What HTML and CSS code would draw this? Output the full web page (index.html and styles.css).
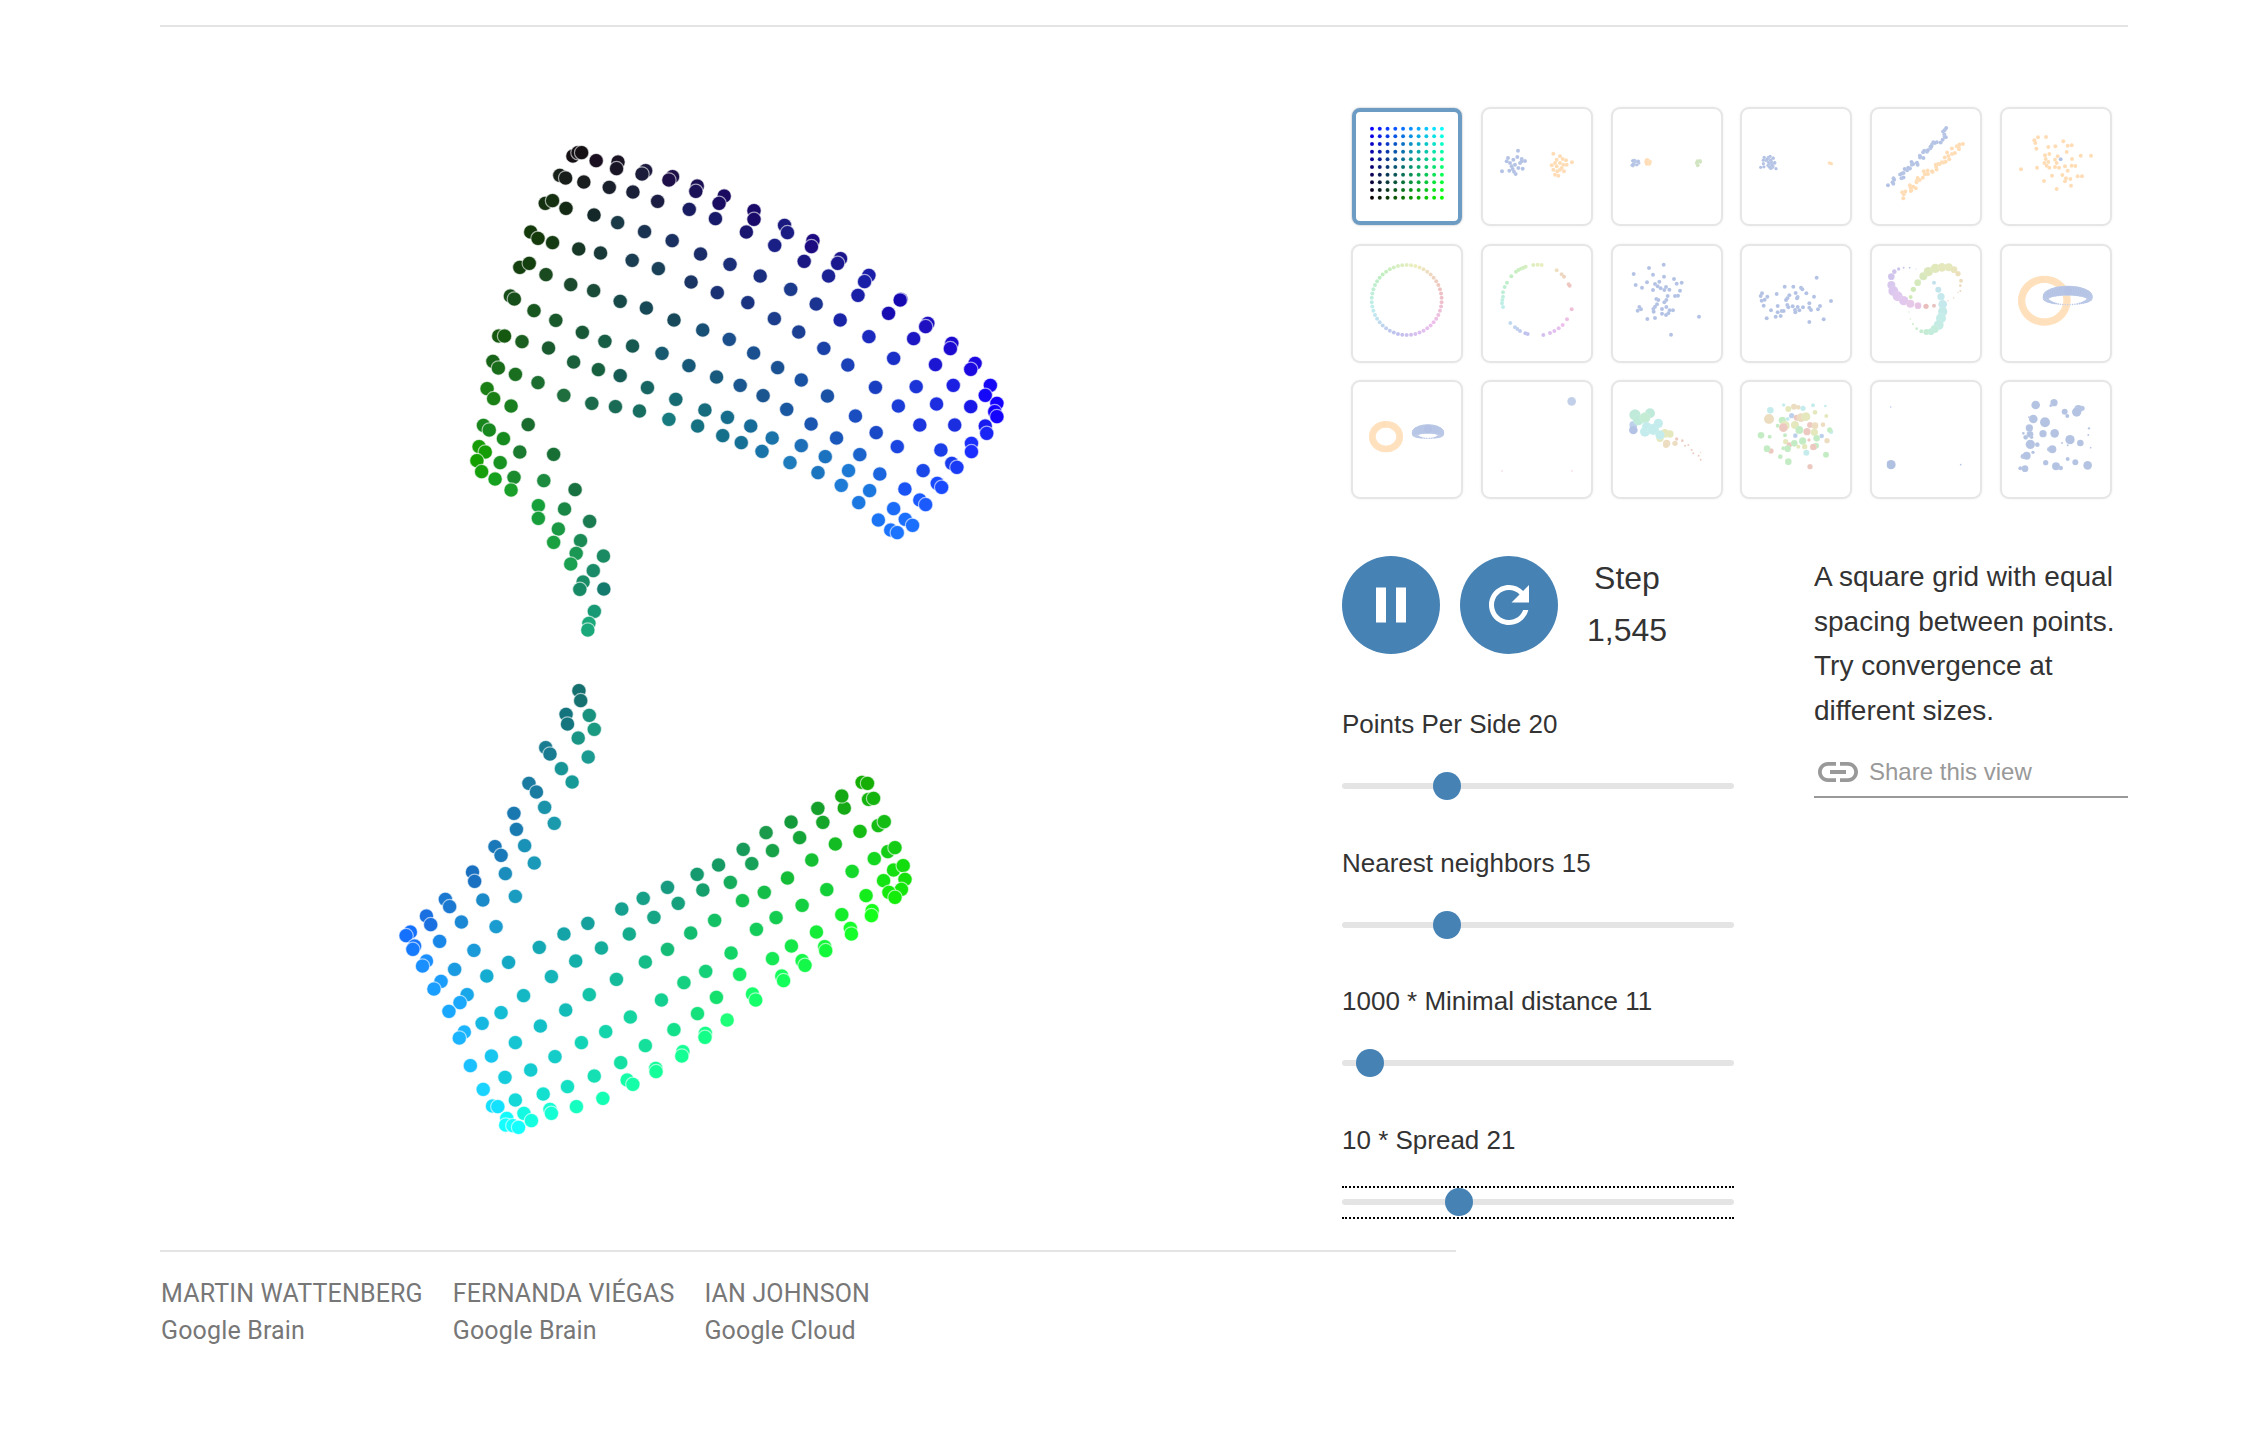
FILE: index.html
```html
<!DOCTYPE html>
<html lang="en">
<head>
  <meta charset="UTF-8" />
  <title>Understanding UMAP</title>
  <link rel="stylesheet" href="styles.css">
</head>
<body>
  <div class="page">
    <div class="rule-top"></div>

    <main class="vis">
      <svg id="plot" class="plot" viewBox="160 60 1182 1190"></svg>

      <section class="panel">
        <div id="presets" class="presets"></div>

        <div class="panel-body">
          <div class="controls">
            <div class="play-row">
              <button class="round-btn" aria-label="Pause">
                <svg viewBox="0 0 24 24"><path d="M6 19h4V5H6v14zm8-14v14h4V5h-4z"/></svg>
              </button>
              <button class="round-btn" aria-label="Restart">
                <svg viewBox="0 0 24 24"><path d="M17.65 6.35C16.2 4.9 14.21 4 12 4c-4.42 0-7.99 3.58-7.99 8s3.57 8 7.99 8c3.73 0 6.84-2.55 7.73-6h-2.08c-.82 2.33-3.04 4-5.65 4-3.31 0-6-2.69-6-6s2.69-6 6-6c1.66 0 3.14.69 4.22 1.78L13 11h7V4l-2.35 2.35z"/></svg>
              </button>
              <div class="step">
                <div>Step</div>
                <div>1,545</div>
              </div>
            </div>

            <div class="slider">
              <label for="points">Points Per Side 20</label>
              <input id="points" type="range" min="10" max="50" value="20">
            </div>
            <div class="slider">
              <label for="neighbors">Nearest neighbors 15</label>
              <input id="neighbors" type="range" min="5" max="45" value="15">
            </div>
            <div class="slider">
              <label for="distance">1000 * Minimal distance 11</label>
              <input id="distance" type="range" min="0" max="286" value="11">
            </div>
            <div class="slider slider-last">
              <label for="spread">10 * Spread 21</label>
              <div class="focused">
                <input id="spread" type="range" min="1" max="72" value="21">
              </div>
            </div>
          </div>

          <div class="about">
            <p>A square grid with equal spacing between points. Try convergence at different sizes.</p>
            <a class="share" href="#">
              <svg viewBox="0 0 24 24"><path d="M3.9 12c0-1.71 1.39-3.1 3.1-3.1h4V7H7c-2.76 0-5 2.24-5 5s2.24 5 5 5h4v-1.9H7c-1.71 0-3.1-1.39-3.1-3.1zM8 13h8v-2H8v2zm9-6h-4v1.9h4c1.71 0 3.1 1.39 3.1 3.1s-1.39 3.1-3.1 3.1h-4V17h4c2.76 0 5-2.24 5-5s-2.24-5-5-5z"/></svg>
              Share this view
            </a>
          </div>
        </div>
      </section>
    </main>

    <footer class="credits">
      <div class="person">
        <div>MARTIN WATTENBERG</div>
        <div>Google Brain</div>
      </div>
      <div class="person">
        <div>FERNANDA VIÉGAS</div>
        <div>Google Brain</div>
      </div>
      <div class="person">
        <div>IAN JOHNSON</div>
        <div>Google Cloud</div>
      </div>
    </footer>
  </div>

  <script src="script.js"></script>
</body>
</html>
```

FILE: styles.css
```css
body {
  margin: 0;
  background: #fff;
  color: #333;
  font-family: "Liberation Sans", Arial, sans-serif;
}
.page {
  width: 1968px;
  margin-left: 160px;
  padding-top: 25px;
}
.rule-top {
  height: 2px;
  background: #e4e4e4;
}
.vis {
  display: flex;
  margin-top: 33px;
}
.plot {
  display: block;
  width: 1182px;
  height: 1190px;
  flex: none;
  filter: blur(0.6px);
}
.plot circle {
  stroke: rgba(255, 255, 255, 0.6);
  stroke-width: 1.2;
}
.panel {
  width: 786px;
  flex: none;
  padding-top: 47px;
}

/* preset thumbnails */
.presets {
  display: grid;
  grid-template-columns: repeat(6, 112px);
  grid-auto-rows: 119px;
  gap: 17.5px 17.8px;
  margin-left: 9px;
}
.preset {
  display: block;
  box-sizing: border-box;
  padding: 0;
  background: #fff;
  border: 2px solid #e6e6e6;
  border-radius: 9px;
  box-shadow: 0 0 3px rgba(0, 0, 0, 0.06);
  cursor: pointer;
}
.preset.selected {
  outline: 4px solid #6c9bc4;
  outline-offset: -5px;
}
.preset svg {
  display: block;
  width: 108px;
  height: 115px;
  filter: blur(0.4px);
}
.preset circle {
  stroke: rgba(255, 255, 255, 0.35);
  stroke-width: 0.8;
}

.panel-body {
  display: flex;
  margin-top: 57px;
}
.controls {
  width: 392px;
  flex: none;
}
.play-row {
  display: flex;
  gap: 20px;
  height: 98px;
  margin-bottom: 55px;
}
.round-btn {
  width: 98px;
  height: 98px;
  padding: 19px;
  border: none;
  border-radius: 50%;
  background: #4682b4;
  cursor: pointer;
}
.round-btn svg {
  display: block;
  width: 60px;
  height: 60px;
  fill: #fff;
}
.step {
  width: 100px;
  margin: -4px 0 0 -1px;
  text-align: center;
  font-size: 32px;
  line-height: 52px;
}
.slider {
  height: 138.6px;
}
.slider-last {
  height: auto;
}
.slider label {
  display: block;
  height: 30px;
  margin-bottom: 33px;
  font-size: 26px;
  line-height: 30px;
}
.slider input {
  display: block;
  width: 392px;
  height: 28px;
  margin: 0;
  background: transparent;
  -webkit-appearance: none;
  appearance: none;
  cursor: pointer;
}
.slider input::-webkit-slider-runnable-track {
  height: 6px;
  border-radius: 3px;
  background: #e4e4e4;
}
.slider input::-webkit-slider-thumb {
  width: 28px;
  height: 28px;
  margin-top: -11px;
  border-radius: 50%;
  background: #4682b4;
  -webkit-appearance: none;
}
.focused {
  margin-top: -2px;
  padding-bottom: 1px;
  border-top: 2px dotted #000;
  border-bottom: 2px dotted #000;
}

.about {
  width: 314px;
  margin-left: 80px;
  flex: none;
}
.about p {
  margin: -1px 0 0;
  font-size: 28px;
  line-height: 44.5px;
}
.share {
  display: flex;
  align-items: center;
  height: 48px;
  margin-top: 15px;
  border-bottom: 2px solid #999;
  color: #999;
  font-size: 24px;
  text-decoration: none;
}
.share svg {
  width: 48px;
  height: 48px;
  margin-right: 7px;
  fill: #999;
}

.credits {
  display: flex;
  gap: 30px;
  width: 1295px;
  padding: 23px 0 0 1px;
  border-top: 2px solid #e4e4e4;
  color: #777;
  font-family: Roboto, Arial, sans-serif;
  font-size: 25px;
  line-height: 37px;
  letter-spacing: 0.15px;
}
```

FILE: script.js
```js
// Projection plot and preset thumbnails, drawn from point data.
const SVG_NS = "http://www.w3.org/2000/svg";

function addDot(svg, x, y, r, fill) {
  const c = document.createElementNS(SVG_NS, "circle");
  c.setAttribute("cx", x);
  c.setAttribute("cy", y);
  c.setAttribute("r", r);
  c.setAttribute("fill", fill);
  svg.appendChild(c);
}

function hex(h) {
  return [1, 3, 5].map((i) => parseInt(h.slice(i, i + 2), 16));
}

// colour of a point: weighted from the nearest anchor colours
function blend(x, y, anchors) {
  let sum = [0, 0, 0], total = 0;
  anchors.forEach(([ax, ay, col]) => {
    const d = Math.hypot(ax - x, ay - y) + 0.5;
    const w = 1 / (d * d * d * d);
    const c = hex(col);
    sum = sum.map((v, i) => v + c[i] * w);
    total += w;
  });
  return "rgb(" + sum.map((v) => Math.round(v / total)).join(",") + ")";
}

/* ---------- main plot: upper sheet ---------- */
const upperPts = [
  [338,78],[352,68],[362,68],[402,92],[462,96],[458,116],[538,122],[528,132],[612,140],[602,150],[680,168],[676,184],[754,198],[740,220],[836,242],[836,268],[920,286],[928,308],[998,332],[994,350],[1074,386],[1066,400],[1152,436],[1140,455],[1240,508],[1238,510],[1314,580],[1308,590],[1380,640],[1376,656],[1444,700],[1432,718],[1486,766],[1472,796],[1504,820],[1498,845],[1504,860],[1472,888],[1476,910],[1434,940],[1434,965],[1380,1000],[1394,1012],[1340,1060],[1352,1072],[1292,1110],[1308,1124],[1252,1168],[1272,1186],[1212,1200],[1230,1208],
  [302,136],[318,144],[368,156],[438,172],[503,186],[571,214],[658,238],[730,266],[815,306],[893,346],[974,394],[1041,438],[1122,496],[1206,550],[1275,626],[1335,704],[1384,766],[1432,830],[1388,885],[1350,960],[1301,1022],[1251,1077],[1220,1136],[1178,1170],
  [262,220],[282,212],[319,235],[396,255],[461,278],[535,305],[611,332],[689,372],[770,403],[853,438],[937,478],[1007,522],[1073,570],[1152,620],[1220,685],[1282,770],[1338,822],[1292,885],[1230,950],[1182,1032],[1154,1082],[1124,1118],
  [222,306],[242,325],[282,338],[354,357],[414,369],[501,391],[573,416],[663,456],[735,488],[819,518],[892,566],[959,606],[1028,655],[1094,705],[1170,772],[1233,828],[1172,908],[1127,974],[1096,1022],[1076,1066],
  [192,412],[218,400],[264,434],[332,464],[395,482],[468,514],[540,534],[616,570],[695,600],[768,628],[835,669],[901,713],[966,750],[1038,798],[1115,858],[1063,924],[1032,980],[1012,1028],
  [166,498],[177,507],[231,542],[291,571],[364,607],[426,634],[502,648],[583,670],[657,707],[733,741],[798,766],[861,797],[926,838],[993,882],[966,947],[935,998],
  [134,618],[150,618],[198,635],[271,654],[340,696],[408,719],[468,737],[543,773],[621,808],[701,840],[763,862],[827,888],[886,924],[858,964],[801,938],[750,917],[681,888],[602,868],[521,843],[455,830],[390,820],[313,796],
  [242,758],[180,733],[118,694],[133,714],[102,776],[120,806],[168,828],[215,884],[92,886],[108,900],[147,926],[192,966],[285,973],[80,950],[97,966],[74,992],[138,998],[87,1025],[176,1042],[124,1047],[258,1052],[168,1080],[344,1079],[243,1127],[315,1137],[243,1165],[384,1174],[298,1197],[285,1237],[359,1232],[347,1270],[422,1278],[332,1302],[394,1322],[366,1356],[357,1378],[423,1377],[397,1444],[382,1480],[379,1500]
];

const upperColors = [
  [350,70,"#141014"],[402,92,"#1a0f20"],[1504,820,"#1400ff"],[1230,1208,"#1a74ff"],[74,992,"#14a000"],[379,1500,"#1aa87a"],[423,1377,"#147a6e"],[344,1079,"#177040"],[285,973,"#176f35"],[215,884,"#1a6b2e"],[313,796,"#1f6e3e"],[455,830,"#1a6b55"],[602,868,"#167a7e"],[750,917,"#146f8a"],[935,998,"#1f7cbc"],[1076,1066,"#1e7cd6"],[1124,1118,"#1a78e0"],[1012,1028,"#1b75bf"],[858,964,"#1874a8"],[993,882,"#1a55b0"],[1115,858,"#1a4dc0"],[1233,828,"#1a3dd8"],[1338,822,"#1c2ee0"],[1432,830,"#1818e8"],[1388,885,"#1a2ee0"],[1350,960,"#1a3ee8"],[1301,1022,"#1a48e8"],[1434,965,"#1a2eff"],[1352,1072,"#1a4aff"],[1308,1124,"#1a5aff"],[1170,772,"#1a3ec0"],[1038,798,"#1a52a5"],[861,797,"#1a5590"],[621,808,"#166a72"],[408,719,"#17603f"],[468,737,"#165a54"],[268,654,"#1a5a2f"],[198,635,"#1a5f1f"],[150,618,"#14590f"],[120,806,"#1a7f14"],[168,828,"#1a7f1f"],[147,926,"#178a1f"],[192,966,"#1a7a2f"],[176,1042,"#1a8a2f"],[124,1047,"#16a01f"],[168,1080,"#1aa02a"],[243,1127,"#16a03a"],[285,1237,"#1aa040"],[332,1302,"#1aa050"],[258,1052,"#1c8a3f"],[315,1137,"#1a8645"],[384,1174,"#1a7a50"],[359,1232,"#1a8a55"],[394,1322,"#1a8a68"],[218,400,"#143f0f"],[264,434,"#1a4a20"],[395,482,"#1a4a38"],[573,416,"#1a4058"],[540,534,"#174855"],[657,707,"#175878"],[835,669,"#1a5090"],[937,478,"#1c3a8c"],[1122,496,"#1a1fa8"],[1240,508,"#1608b0"],[1314,580,"#1e10c0"],[1220,685,"#1a2ec8"],[1444,700,"#1c08e0"],[1380,640,"#1c0ad0"],[998,332,"#1c0a80"],[836,242,"#1a0a6a"],[754,198,"#1a0a60"],[612,140,"#1f0f48"],[503,186,"#1a2038"],[396,255,"#14282a"],[319,235,"#142a14"],[368,156,"#1a1e1e"],[282,212,"#143010"],[222,306,"#143a0c"],[461,278,"#1a3a48"],[611,332,"#1a3060"],[689,372,"#1a2d68"],[853,438,"#1a2f80"],[730,266,"#171a68"],[893,346,"#1a1f85"],[770,403,"#1a2f78"]
];

/* ---------- main plot: lower sheet ---------- */
const lowerPts = [
  [557,62],[562,92],[521,133],[586,136],[525,162],[600,178],[555,204],[464,233],[476,252],[583,261],[508,296],[538,336],[417,340],[438,366],[461,412],[375,430],[488,460],[382,478],[405,527],[322,530],[339,556],[432,579],[259,606],[351,611],[265,634],[379,679],[183,688],[195,710],[288,690],[130,738],[142,764],[228,756],[325,770],[85,786],[73,797],[97,828],[92,838],[167,814],[263,841],[130,873],[119,888],[209,898],[360,877],[299,918],[171,934],[151,957],[244,974],[224,998],[193,1024],[339,1028],[286,1060],[236,1086],[222,1104],[379,1118],[312,1158],[253,1187],[350,1222],[289,1258],[379,1290],[315,1308],[330,1310],[355,1345],[352,1365],[372,1367],[388,1372],[403,1330],[424,1352],[476,1318],[480,1330],[457,1272],[422,1200],[490,1160],[550,1310],[624,1285],[525,1250],[600,1218],[564,1118],[449,1068],[520,1020],[402,977],[480,920],[586,974],[632,1085],[701,1041],[662,928],[548,873],[446,832],[515,792],[620,834],[582,760],[698,792],[743,876],[677,717],[737,685],[767,742],[805,652],[835,700],[870,789],[805,838],[888,613],[904,660],[948,585],[981,637],[937,751],[1015,692],[1017,538],[1041,581],[1076,667],[1109,743],[1054,778],[983,849],[912,904],[851,938],[788,990],[942,982],[889,1031],[823,1079],[743,1127],[674,1178],[772,1195],[773,1205],[692,1230],[708,1243],[848,1145],[845,1158],[911,1090],[910,1102],[972,1050],[1043,972],[1052,990],[1007,913],[1099,866],[1125,918],[1130,932],[1152,828],[1182,872],[1190,886],[1245,830],[1248,842],[1222,786],[1182,706],[1251,659],[1293,734],[1317,775],[1320,792],[1378,722],[1376,737],[1361,677],[1322,604],[1141,624],[1209,570],[1275,522],[1344,484],[1384,566],[1099,542],[1175,503],[1240,457],[1081,488],[1151,456],[1226,415],[1300,414],[1293,378],[1350,337],[1365,340],[1368,388],[1382,385],[1395,467],[1412,455],[1422,545],[1442,533],[1438,600],[1465,587],[1470,628],[1410,632],[1460,658],[1425,667],[1442,682]
];

const lowerColors = [
  [557,62,"#14706e"],[600,178,"#1a9a80"],[583,261,"#1a9a90"],[538,336,"#169a98"],[488,460,"#1a9aac"],[432,579,"#1a9ab8"],[379,679,"#1a9cc0"],[325,770,"#1a9cd0"],[263,841,"#1a9ad8"],[209,898,"#1a9ae0"],[119,888,"#1a8fff"],[73,797,"#1470ff"],[130,738,"#1a70e0"],[183,688,"#1a78d0"],[259,606,"#1a70c0"],[322,530,"#1a78b8"],[375,430,"#1a78b0"],[417,340,"#1a7aa0"],[464,233,"#1a7c90"],[521,133,"#14747e"],[151,957,"#1a9eff"],[193,1024,"#1aa8ff"],[222,1104,"#1ab4ff"],[253,1187,"#1ac0ff"],[289,1258,"#1ad4ff"],[315,1308,"#14e0ff"],[372,1367,"#14ffff"],[424,1352,"#14ffe0"],[480,1330,"#14ffd4"],[550,1310,"#14ffc0"],[624,1285,"#14ffb4"],[708,1243,"#14ffa8"],[773,1205,"#14ff9a"],[845,1158,"#14ff94"],[911,1102,"#14ff88"],[972,1050,"#1fff7a"],[1052,990,"#14ff6a"],[1130,932,"#14ff5a"],[1190,886,"#14f84a"],[1248,842,"#14f83c"],[1320,792,"#14ff2a"],[1376,737,"#14ff1a"],[1442,682,"#14ec0a"],[1470,628,"#14e00a"],[1442,533,"#14cc14"],[1412,455,"#14bc14"],[1382,385,"#14b40f"],[1365,340,"#14ae05"],[1293,378,"#14a814"],[1226,415,"#14a02a"],[1151,456,"#149a3a"],[1081,488,"#1a9a4a"],[1017,538,"#189a5a"],[948,585,"#169a64"],[888,613,"#149a6e"],[805,652,"#169a80"],[737,685,"#16a088"],[677,717,"#16a090"],[582,760,"#14a09c"],[515,792,"#14a4a8"],[446,832,"#14a8b4"],[360,877,"#14a8c4"],[299,918,"#14acd0"],[339,1028,"#14bcd4"],[402,977,"#14b8c4"],[449,1068,"#14c0c8"],[520,1020,"#14bcb8"],[586,974,"#14c4a8"],[662,928,"#14bc9c"],[743,876,"#14bc88"],[805,838,"#14bc78"],[870,789,"#14bc70"],[937,751,"#14c064"],[1015,692,"#14c04f"],[1076,667,"#14bc48"],[1141,624,"#14bc38"],[1209,570,"#14c032"],[1275,522,"#14bc24"],[1344,484,"#14bc14"],[1384,566,"#14d81f"],[1322,604,"#14d82a"],[1251,659,"#14d038"],[1182,706,"#14d040"],[1109,743,"#14cc50"],[1054,778,"#14cc5a"],[983,849,"#14d468"],[912,904,"#14d078"],[851,938,"#14d080"],[788,990,"#14d090"],[701,1041,"#14d4a0"],[632,1085,"#14d4ac"],[564,1118,"#14d4b8"],[490,1160,"#14ccc8"],[422,1200,"#14ccd0"],[350,1222,"#14ccdc"],[379,1290,"#14d8d8"],[457,1272,"#14e0d0"],[525,1250,"#14e0c4"],[600,1218,"#14e0b4"],[674,1178,"#14e0a4"],[743,1127,"#14e09c"],[823,1079,"#14e08c"],[889,1031,"#14e07c"],[942,982,"#14e06e"],[1007,913,"#14e864"],[1099,866,"#14e854"],[1152,828,"#14e848"],[1222,786,"#14ec38"],[1293,734,"#14ec2c"],[1361,677,"#14ec1c"],[1410,632,"#14e414"]
];

const plot = document.getElementById("plot");
upperPts.forEach(([x, y]) => {
  addDot(plot, x / 2.75 + 450, y / 3 + 130, 7.2, blend(x, y, upperColors));
});
lowerPts.forEach(([x, y]) => {
  addDot(plot, x / 2.8 + 380, y / 3 + 670, 7.2, blend(x, y, lowerColors));
});

/* ---------- thumbnails ---------- */
const BLUE = "#b3c2e4", ORANGE = "#ffdcb4", RING_ORANGE = "#ffdfba";
const GREEN = "#c4ecc4", YELLOW = "#e4e8bc", TAN = "#ecdcc0", PINK = "#ecc8c0", AQUA = "#c4ecec", SKY = "#bcd0ec";

let seed = 7;
function rand() {
  seed = (seed * 16807) % 2147483647;
  return seed / 2147483647;
}

function cluster(cx, cy, rx, ry, n, r, fill) {
  const out = [];
  for (let i = 0; i < n; i++) {
    const a = rand() * Math.PI * 2, d = Math.sqrt(rand());
    out.push([cx + Math.cos(a) * d * rx, cy + Math.sin(a) * d * ry, r, fill]);
  }
  return out;
}

function band(x1, y1, x2, y2, n, jitter, r, fill) {
  const out = [];
  for (let i = 0; i < n; i++) {
    const t = i / (n - 1);
    out.push([x1 + (x2 - x1) * t + (rand() - 0.5) * jitter, y1 + (y2 - y1) * t + (rand() - 0.5) * jitter, r, fill]);
  }
  return out;
}

function ringHue(x, y, cx, cy) {
  const deg = Math.atan2(x - cx, cy - y) * 180 / Math.PI;
  return "hsl(" + (75 - deg + 720) % 360 + ",58%,84%)";
}

function ring(cx, cy, r, n) {
  const out = [];
  for (let i = 0; i < n; i++) {
    const a = i / n * Math.PI * 2;
    const x = cx + Math.sin(a) * r, y = cy - Math.cos(a) * r;
    out.push([x, y, 6, ringHue(x, y, cx, cy)]);
  }
  return out;
}

// loop seen from the side: big dots at the back, small at the front
function hoop(cx, cy, rx, ry, n, big, small, fill) {
  const out = [];
  for (let i = 0; i < n; i++) {
    const a = i / n * Math.PI * 2;
    const t = (1 - Math.cos(a)) / 2;
    out.push([cx + Math.sin(a) * rx, cy - Math.cos(a) * ry, small + (big - small) * (1 - t), fill]);
  }
  return out.sort((p, q) => p[2] - q[2]);
}

function withStyle(pts, r, fill) {
  return pts.map(([x, y]) => [x, y, r, fill]);
}

const gridDots = [];
for (let row = 0; row < 10; row++) {
  for (let col = 0; col < 10; col++) {
    gridDots.push([96 + col * 23.3, 87 + row * 23, 6, "rgb(10," + Math.round(col * 255 / 9) + "," + Math.round(255 - row * 255 / 9) + ")"]);
  }
}

const gappedRing = [[580,90],[593,89],[605,90],[650,106],[665,118],[672,125],[686,148],[689,152],[695,223],[681,253],[668,270],[656,280],[643,288],[630,294],[610,300],[563,297],[556,295],[540,288],[532,282],[525,277],[511,264],[489,216],[486,205],[487,195],[489,185],[489,172],[494,156],[501,143],[514,124],[528,110],[535,105],[543,101],[550,98],[557,95]];

// each: [origin x, origin y in the measuring crop, dots, white covers]
const presets = [
  [33, 22, gridDots],
  [423, 22, [
    ...withStyle([[534,153],[504,175],[555,184],[486,215],[527,223],[510,190],[520,180],[532,172],[545,178],[540,190],[525,195],[515,200],[535,205],[548,207],[508,213],[522,216],[545,185],[518,208],[500,185]], 6, BLUE),
    ...withStyle([[640,162],[696,188],[660,170],[668,178],[678,182],[650,180],[645,190],[635,197],[660,190],[670,195],[680,195],[650,200],[640,210],[660,210],[672,215],[645,225],[655,228],[665,205],[652,215]], 6, ORANGE)
  ]],
  [813, 22, [
    ...cluster(884, 190, 13, 11, 16, 5, BLUE),
    ...cluster(924, 189, 10, 10, 12, 5, ORANGE),
    ...cluster(1076, 190, 8, 12, 12, 5, "#cfe3bd")
  ]],
  [30, 22, [
    ...cluster(115, 188, 20, 20, 26, 5, BLUE),
    [92, 203, 5, BLUE], [138, 207, 5, BLUE],
    [298, 190, 5, ORANGE], [304, 192, 5, ORANGE]
  ]],
  [420, 22, [
    ...band(482, 252, 656, 94, 42, 18, 6, BLUE),
    ...band(518, 288, 692, 132, 42, 18, 6, ORANGE)
  ]],
  [810, 22, [
    ...withStyle([[924,113],[948,112],[913,122],[916,130],[919,147],[1000,125],[955,142],[976,140],[1013,138],[1025,137],[1010,157],[958,163],[945,167],[983,170],[1052,168],[1083,168],[975,180],[947,178],[943,190],[955,187],[980,190],[1026,178],[873,209],[921,204],[950,198],[958,204],[975,202],[987,204],[1005,200],[1025,198],[1036,199],[1013,213],[997,226],[966,228],[1008,236],[1021,238],[1005,245],[1043,230],[1056,230],[942,244],[980,268],[1023,258]], 6, ORANGE),
    [992, 179, 6, BLUE]
  ]],
  [33, 27, ring(200, 195, 105, 50)],
  [423, 27, gappedRing.map(([x, y]) => [x, y, 6, ringHue(x, y, 590, 195)])],
  [813, 27, withStyle([[971,89],[881,117],[927,99],[939,119],[972,125],[1002,132],[887,150],[921,142],[906,158],[958,140],[945,147],[953,154],[1010,146],[1025,143],[939,165],[962,160],[973,165],[978,156],[988,164],[1020,167],[1005,183],[1014,182],[983,183],[979,195],[973,202],[949,192],[955,195],[951,208],[945,215],[940,222],[941,230],[966,222],[979,216],[999,226],[989,226],[985,235],[978,240],[966,236],[898,216],[893,227],[903,223],[922,252],[945,249],[1077,245],[993,299]], 6, BLUE)],
  [30, 27, withStyle([[260,128],[164,155],[190,155],[213,158],[217,163],[96,175],[92,183],[112,185],[140,177],[178,181],[172,190],[197,174],[203,186],[229,175],[252,185],[95,197],[104,194],[168,195],[201,190],[101,212],[143,213],[172,210],[175,217],[188,214],[203,216],[219,217],[238,205],[238,218],[243,225],[264,223],[270,213],[303,198],[123,226],[155,228],[161,228],[143,232],[195,225],[196,232],[208,226],[137,245],[152,243],[110,250],[238,261],[281,253]], 6, BLUE)],
  [420, 27, [
    [558,102,1.5,BLUE],[539,98,2.5,BLUE],[521,98,3,"#c8c4ec"],[506,102,5,"#c8c4ec"],[493,110,7,"#d0c4ec"],[484,125,10,"#d0c4ec"],[484,150,12,"#d8c8ee"],[490,168,15,"#dcc8ee"],[503,184,15,"#e0c8ee"],[521,197,14,"#e2c8ec"],[541,206,12,"#e6c8e8"],[564,212,10,"#e8c4e4"],[588,214,8,"#e8bdbc"],[612,212,6,"#e8c0c0"],
    [612,143,6,"#c0e0ec"],[625,164,9,"#c4e4ec"],[633,185,11,"#c4e8ec"],[638,208,13,"#c4e8ec"],[638,230,14,"#c4eae8"],[633,250,15,"#c4ece8"],[626,270,15,"#c4ece4"],[614,282,12,"#c4ecdc"],[603,290,10,"#c4ecdc"],[589,291,9,"#c4ecd4"],[574,289,6,"#c4ecd0"],[560,281,4,"#c4eccc"],[549,267,3,"#c8ecc8"],[541,252,2,"#ccecc4"],[537,231,2,"#ccecc4"],
    [542,186,6,"#cfecb8"],[550,163,8,"#cfeab8"],[563,143,10,"#d4eabc"],[580,124,12,"#d8e8bc"],[595,110,14,"#dce8bc"],[616,100,14,"#e0e8bc"],[636,97,13,"#e4e8bc"],[656,97,12,"#e4e8bc"],[672,104,10,"#e8e4bc"],[684,116,8,"#ece0bc"],[693,137,6,"#ecdcbc"],[691,152,4,"#ecd8bc"],[691,168,3,"#ecd4bc"],[684,172,2,"#ecd0bc"],[671,189,2,"#eccabc"],[654,197,2,"#eccabc"]
  ]],
  [810, 27, [
    ...hoop(943, 197, 68, 64, 60, 11, 11, RING_ORANGE),
    ...hoop(1013, 188, 66, 21, 56, 15, 2, BLUE)
  ]],
  [33, 435, [
    ...hoop(138, 605, 41, 37, 50, 10, 10, RING_ORANGE),
    ...hoop(264, 596, 40, 14, 50, 14, 2, BLUE)
  ]],
  [423, 435, [[695, 499, 13, "#c2cfe8"], [486, 708, 2, "#f0c0c8"], [696, 708, 2, "#f0c0c8"]], [[660, 470, 70, 16]]],
  [813, 435, [
    [880,570,12,SKY],[880,585,13,BLUE],
    [885,540,17,"#bfeada"],[930,535,15,"#bfeada"],[895,555,16,"#bfeada"],[915,548,16,"#c4ecd4"],
    [975,595,13,YELLOW],[990,597,11,YELLOW],[960,610,11,YELLOW],[980,625,11,TAN],[978,630,9,TAN],[1005,625,8,TAN],
    [915,590,15,AQUA],[920,575,14,AQUA],[940,583,17,AQUA],[955,565,14,AQUA],[960,600,14,AQUA],
    [1010,612,5,"#eccabc"],[1027,617,4,"#eccabc"],[1035,632,3,"#eccabc"],[1045,630,3,"#eccabc"],[1055,645,3,"#eccabc"],[1060,655,3,"#eccabc"],[1076,662,3,"#eccabc"],[1082,652,2,"#eccabc"],[1082,674,3,"#eccabc"]
  ]],
  [30, 435, [
    [121,526,10,AQUA],[117,552,15,TAN],[161,510,5,AQUA],[175,522,9,YELLOW],[192,515,9,TAN],[205,517,7,TAN],[219,520,8,AQUA],[249,511,6,AQUA],[286,513,4,AQUA],[255,532,7,YELLOW],[289,543,6,YELLOW],[185,542,8,SKY],[200,548,9,PINK],[213,548,13,TAN],[228,545,13,YELLOW],[157,556,11,GREEN],[173,552,6,AQUA],[143,572,6,GREEN],[165,572,14,YELLOW],[160,578,13,PINK],[240,570,9,PINK],[255,572,10,TAN],[279,569,7,TAN],[195,570,12,YELLOW],[208,585,12,GREEN],[231,590,11,PINK],[253,592,11,YELLOW],[303,590,7,AQUA],[299,585,8,GREEN],[93,601,10,GREEN],[119,605,6,GREEN],[165,601,6,GREEN],[196,602,7,SKY],[275,603,7,SKY],[260,610,10,GREEN],[237,615,5,PINK],[218,618,11,GREEN],[167,620,8,YELLOW],[178,630,8,PINK],[193,625,10,GREEN],[205,635,6,YELLOW],[224,635,8,YELLOW],[258,632,9,GREEN],[250,636,10,PINK],[291,617,8,TAN],[123,648,8,PINK],[111,641,10,GREEN],[160,640,6,GREEN],[173,641,10,GREEN],[229,653,9,AQUA],[288,659,9,GREEN],[151,665,7,GREEN],[175,680,10,GREEN],[240,695,8,PINK]
  ]],
  [420, 435, [[483, 689, 14, "#b0c0e0"], [482, 516, 2.5, BLUE], [692, 689, 2.5, BLUE]], [[450, 670, 20, 40]]],
  [810, 435, [[917,510,13],[972,503,11],[962,512,4],[1004,530,9],[1012,543,6],[1056,520,8],[1045,522,12],[1040,531,14],[897,547,3],[910,552,13],[945,562,15],[898,579,11],[880,595,4],[887,607,7],[900,598,10],[905,607,5],[939,596,11],[974,595,13],[1077,580,3.5],[1075,600,3],[1020,614,14],[901,628,14],[922,629,7],[880,664,8],[890,662,12],[909,652,5],[958,643,7],[967,643,12],[1051,624,10],[996,624,3],[1013,631,3],[1082,638,2.5],[947,683,8],[1013,672,6],[1036,682,9],[992,699,7],[978,694,12],[1073,691,13],[871,700,6],[885,701,10]].map(([x, y, r]) => [x, y, r, "#b4c3e2"])]
];

const presetBox = document.getElementById("presets");
presets.forEach(([ox, oy, dots, covers], i) => {
  const btn = document.createElement("button");
  btn.className = i === 0 ? "preset selected" : "preset";
  const svg = document.createElementNS(SVG_NS, "svg");
  svg.setAttribute("viewBox", (ox + 6) + " " + (oy + 6) + " 324 345");
  dots.forEach(([x, y, r, fill]) => addDot(svg, x, y, r, fill));
  (covers || []).forEach(([x, y, w, h]) => {
    const rect = document.createElementNS(SVG_NS, "rect");
    rect.setAttribute("x", x);
    rect.setAttribute("y", y);
    rect.setAttribute("width", w);
    rect.setAttribute("height", h);
    rect.setAttribute("fill", "#fff");
    svg.appendChild(rect);
  });
  btn.appendChild(svg);
  presetBox.appendChild(btn);
});
```
